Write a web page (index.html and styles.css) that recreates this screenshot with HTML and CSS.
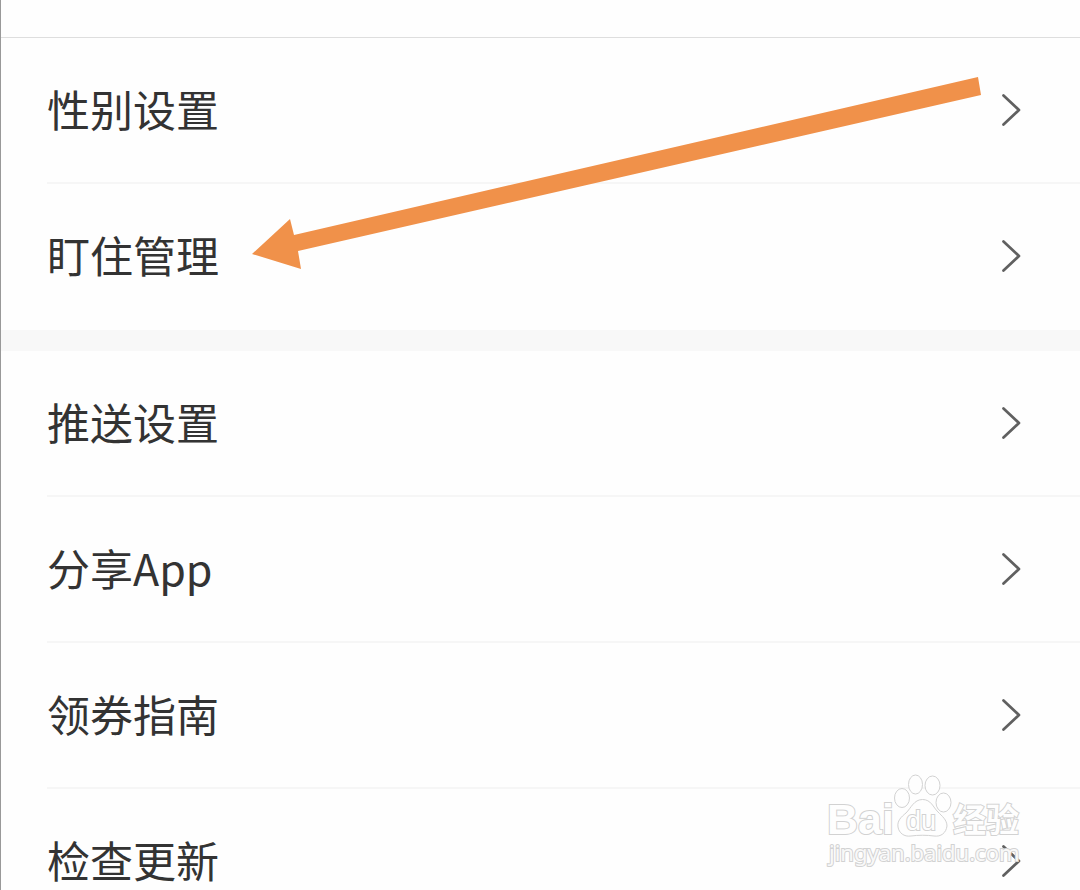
FILE: index.html
```html
<!DOCTYPE html>
<html lang="zh-CN">
<head>
  <meta charset="UTF-8">
  <meta name="viewport" content="width=device-width, initial-scale=1">
  <title>设置</title>
  <link rel="stylesheet" href="styles.css">
</head>
<body>

  <svg class="symbols" aria-hidden="true">
    <symbol id="chevron" viewBox="0 0 20 34">
      <path d="M2.5 2.5 18 17 2.5 31.5" fill="none" stroke="currentColor" stroke-width="2.7" stroke-linecap="round" stroke-linejoin="round"/>
    </symbol>
  </svg>

  <main class="page">
    <header class="top"></header>

    <ul class="group">
      <li><a class="row" href="#gender"><span class="label">性别设置</span><svg class="chevron"><use href="#chevron"/></svg></a></li>
      <li><a class="row" href="#watch"><span class="label">盯住管理</span><svg class="chevron"><use href="#chevron"/></svg></a></li>
    </ul>

    <ul class="group">
      <li><a class="row" href="#push"><span class="label">推送设置</span><svg class="chevron"><use href="#chevron"/></svg></a></li>
      <li><a class="row" href="#share"><span class="label">分享App</span><svg class="chevron"><use href="#chevron"/></svg></a></li>
      <li><a class="row" href="#coupon"><span class="label">领券指南</span><svg class="chevron"><use href="#chevron"/></svg></a></li>
      <li><a class="row" href="#update"><span class="label">检查更新</span><svg class="chevron"><use href="#chevron"/></svg></a></li>
    </ul>

    <!-- 指向“盯住管理”的箭头 -->
    <svg class="arrow" viewBox="0 0 732 194" aria-hidden="true">
      <path d="M1 178 39 143 43 159 727 1 730 19 47 175 50 193Z" fill="#f0914a"/>
    </svg>

    <!-- 水印 -->
    <svg class="watermark" viewBox="0 0 210 102" role="img" aria-label="Baidu经验">
      <g class="outline">
        <text class="wm-bai" x="7" y="64">Bai</text>
        <ellipse cx="82" cy="28" rx="7.5" ry="9.5"/>
        <ellipse cx="95.5" cy="14.5" rx="7" ry="9.5"/>
        <ellipse cx="112.5" cy="15.5" rx="7.5" ry="9.5"/>
        <ellipse cx="123.5" cy="32.5" rx="7.5" ry="9.5"/>
        <path d="M102.5 29.5C94 29.5 91 38 86 43C81 47 77 51 78 57C79 63 84 67 91 66C98 65 107 65 114 66C121 67 126 63 127 56C127 50 122 46 118 42C113 37 111 29.5 102.5 29.5Z"/>
        <text class="wm-du" x="86" y="60">du</text>
        <text class="wm-cn" x="133" y="62">经验</text>
        <text class="wm-url" x="9" y="91">jingyan.baidu.com</text>
      </g>
    </svg>
  </main>

</body>
</html>
```
FILE: styles.css
```css
* {
  box-sizing: border-box;
}
body {
  margin: 0;
  font-family: "Noto Sans CJK SC", sans-serif;
  background-color: #fefefe;
  color: #333;
}
.symbols {
  position: absolute;
  width: 0;
  height: 0;
}
.page {
  position: relative;
  height: 100vh;
  overflow: hidden;
  border-left: 1px solid #999;
}
.top {
  height: 38px;
  border-bottom: 1px solid #dedede;
}
.group {
  margin: 0;
  padding: 0;
  list-style: none;
}
.group + .group {
  border-top: 21px solid #f8f8f8;
}
.group li {
  margin-left: 46px;
}
.row {
  display: flex;
  align-items: center;
  justify-content: space-between;
  height: 146px;
  padding-right: 59px;
  border-bottom: 2px solid #f6f6f6;
  font-size: 43px;
  line-height: 60px;
  color: inherit;
  text-decoration: none;
}
.group li:last-child .row {
  border-bottom-color: transparent;
}
.label {
  padding-bottom: 4px;
}
.chevron {
  width: 20px;
  height: 34px;
  color: #606060;
}
.arrow {
  position: absolute;
  left: 250px;
  top: 76px;
  width: 732px;
  height: 194px;
}
.watermark {
  position: absolute;
  right: 50px;
  top: 770px;
  width: 210px;
  height: 102px;
}
.outline {
  fill: #fefefe;
  stroke: #d2d2d2;
  stroke-width: 1px;
}
.outline text {
  paint-order: stroke;
  stroke-width: 2px;
}
.wm-bai {
  font: bold 43px "Liberation Sans", sans-serif;
}
.wm-du {
  font: 27px "Liberation Sans", sans-serif;
}
.wm-cn {
  font: bold 33px "Noto Sans CJK SC", sans-serif;
}
.wm-url {
  font: 22px "Noto Sans", sans-serif;
  fill-opacity: 0.9;
}
```
